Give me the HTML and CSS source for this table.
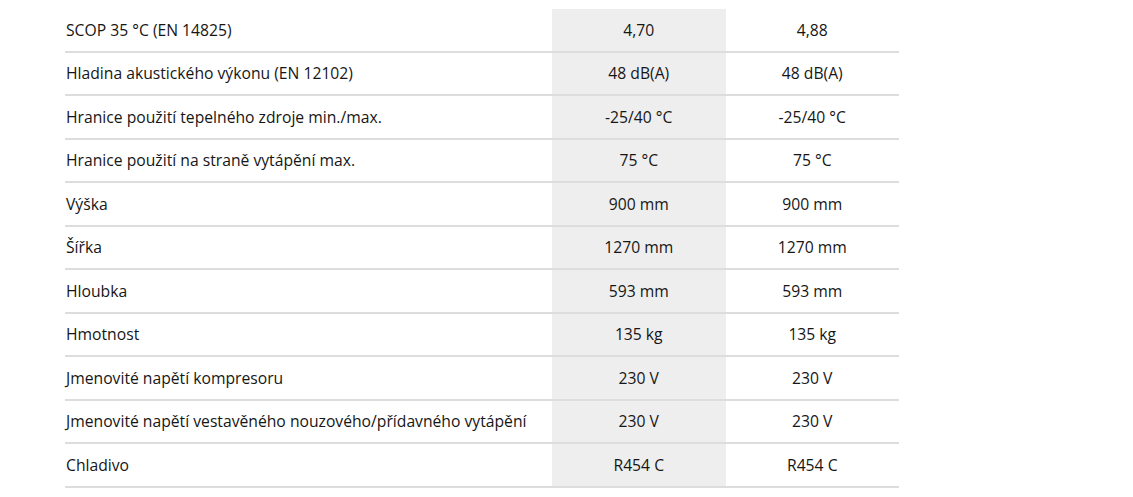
FILE: index.html
```html
<!DOCTYPE html>
<html lang="cs">
<head>
<meta charset="utf-8">
<link rel="stylesheet" href="styles.css">
</head>
<body>
<table class="spec">
  <colgroup><col class="c-label"><col class="c-a"><col class="c-b"></colgroup>
  <tbody>
    <tr><td>SCOP 35 °C (EN 14825)</td><td>4,70</td><td>4,88</td></tr>
    <tr><td>Hladina akustického výkonu (EN 12102)</td><td>48 dB(A)</td><td>48 dB(A)</td></tr>
    <tr><td>Hranice použití tepelného zdroje min./max.</td><td>-25/40 °C</td><td>-25/40 °C</td></tr>
    <tr><td>Hranice použití na straně vytápění max.</td><td>75 °C</td><td>75 °C</td></tr>
    <tr><td>Výška</td><td>900 mm</td><td>900 mm</td></tr>
    <tr><td>Šířka</td><td>1270 mm</td><td>1270 mm</td></tr>
    <tr><td>Hloubka</td><td>593 mm</td><td>593 mm</td></tr>
    <tr><td>Hmotnost</td><td>135 kg</td><td>135 kg</td></tr>
    <tr><td>Jmenovité napětí kompresoru</td><td>230 V</td><td>230 V</td></tr>
    <tr><td>Jmenovité napětí vestavěného nouzového/přídavného vytápění</td><td>230 V</td><td>230 V</td></tr>
    <tr><td>Chladivo</td><td>R454 C</td><td>R454 C</td></tr>
  </tbody>
</table>
</body>
</html>
```
FILE: styles.css
```css
html, body {
  margin: 0;
  background: #fff;
}
body {
  padding: 9px 0 0 65px;
  font-family: "Open Sans", sans-serif;
  font-size: 15.7px;
  color: #161616;
}
.spec {
  border-collapse: collapse;
  width: 834px;
  table-layout: fixed;
}
.c-label { width: 487px; }
.c-a { width: 173.5px; background: #eeeeee; }
.c-b { width: 173.5px; }
.spec td {
  height: 41.5px;
  padding: 0;
  border-bottom: 2px solid #dddddd;
  vertical-align: middle;
  text-align: center;
  white-space: nowrap;
}
.spec td:first-child {
  text-align: left;
  padding-left: 1px;
}
```
